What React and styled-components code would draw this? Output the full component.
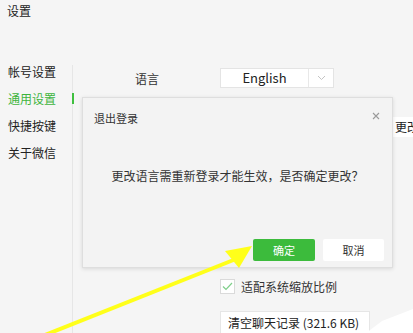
import React from "react";
import styled, { createGlobalStyle } from "styled-components";

const GlobalStyle = createGlobalStyle`
html, body {
margin:0;
padding:0;
background:#f5f5f5;
overflow:hidden;
}
* { box-sizing:border-box; }
`;

const menu = ["帐号设置", "通用设置", "快捷按键", "关于微信"];

function App() {
    return (
<Page>
<GlobalStyle />
<Header>设置</Header>
<Body>
    <Nav>
        {menu.map((m, i) => (
            <NavItem key={m} active={i === 1}>{m}</NavItem>
        ))}
    </Nav>
    <Rail />
    <Content>
        <Row top={10}>
            <Label>语言</Label>
            <Select>
                <SelectValue>English</SelectValue>
                <SelectArrow>
                    <svg width="9" height="6" viewBox="0 0 9 6">
                        <path d="M1 1 L4.5 4.5 L8 1" fill="none" stroke="#c4c4c4" strokeWidth="1" />
                    </svg>
                </SelectArrow>
            </Select>
        </Row>
        <Row top={29}>
            <Label />
            <Control>
                <PathBox />
                <SmallButton>更改</SmallButton>
            </Control>
        </Row>
        <Row top={141}>
            <Label />
            <Control>
                <Check>
                    <svg width="11" height="9" viewBox="0 0 11 9">
                        <path d="M1 4.5 L4 7.5 L10 1" fill="none" stroke="#7fcf8a" strokeWidth="1.2" />
                    </svg>
                </Check>
                <CheckLabel>适配系统缩放比例</CheckLabel>
            </Control>
        </Row>
        <Row top={16}>
            <Label />
            <ClearButton>清空聊天记录 (321.6 KB)</ClearButton>
        </Row>
    </Content>
</Body>

<Dialog>
    <DialogHead>
        <DialogTitle>退出登录</DialogTitle>
        <Close>
            <svg width="8" height="8" viewBox="0 0 8 8">
                <path d="M1 1 L7 7 M7 1 L1 7" stroke="#9a9a9a" strokeWidth="1.1" />
            </svg>
        </Close>
    </DialogHead>
    <Message>更改语言需重新登录才能生效，是否确定更改？</Message>
    <Buttons>
        <DialogButton primary>确定</DialogButton>
        <DialogButton>取消</DialogButton>
    </Buttons>
</Dialog>

<Annotation width="413" height="333" viewBox="0 0 413 333">
    <line x1="40" y1="337" x2="236" y2="259" stroke="#ffff1a" strokeWidth="4" />
    <polygon points="252,246 225,251 239,268" fill="#ffff1a" />
    <polygon points="366,333 382,321 413,309 413,333" fill="#ffffff" />
</Annotation>
</Page>
    );
}

const Page = styled.div`
position:relative;
width:413px;
height:333px;
overflow:hidden;
background:#f5f5f5;
font-family:"Noto Sans CJK SC", "Noto Sans", sans-serif;
color:#333;
`;

const Header = styled.div`
height:24px;
padding:3px 0 0 7px;
font-size:12px;
line-height:16px;
color:#222;
`;

const Body = styled.div`
display:flex;
margin-top:34px;
height:275px;
`;

const Nav = styled.div`
flex-shrink:0;
width:72px;
padding-left:8px;
`;

const NavItem = styled.div`
position:relative;
height:27px;
line-height:27px;
font-size:12px;
color:${p => p.active ? "#3db43d" : "#222"};

&::after {
    content:"";
    display:${p => p.active ? "block" : "none"};
    position:absolute;
    right:-2px;
    top:8px;
    width:2px;
    height:11px;
    background:#3fbf3f;
}
`;

const Rail = styled.div`
flex-shrink:0;
width:1px;
margin-top:7px;
background:#e6e6e6;
`;

const Content = styled.div`
flex:1;
min-width:0;
padding-left:62px;
`;

const Row = styled.div`
display:grid;
grid-template-columns:85px auto;
align-items:center;
margin-top:${p => p.top}px;
`;

const Label = styled.div`
font-size:12px;
color:#333;
padding-top:1px;
`;

const Control = styled.div`
display:flex;
align-items:center;
`;

const Select = styled.div`
display:flex;
width:114px;
height:20px;
background:#fff;
border:1px solid #e4e4e4;
`;

const SelectValue = styled.div`
flex:1;
text-align:center;
font-size:13px;
line-height:18px;
color:#222;
`;

const SelectArrow = styled.div`
width:25px;
border-left:1px solid #e8e8e8;
display:flex;
align-items:center;
justify-content:center;
`;

const PathBox = styled.div`
flex-shrink:0;
width:173px;
height:20px;
`;

const SmallButton = styled.div`
flex-shrink:0;
height:20px;
padding:0 2px;
background:#fff;
font-size:12px;
line-height:20px;
color:#222;
white-space:nowrap;
`;

const Check = styled.div`
width:15px;
height:15px;
background:#fff;
border:1px solid #dadada;
display:flex;
align-items:center;
justify-content:center;
`;

const CheckLabel = styled.div`
margin-left:6px;
font-size:12px;
color:#333;
`;

const ClearButton = styled.div`
width:150px;
height:26px;
padding-left:7px;
background:#fff;
border:1px solid #e6e6e6;
font-size:12px;
line-height:22px;
color:#222;
white-space:nowrap;
overflow:hidden;
`;

const Dialog = styled.div`
position:absolute;
left:82px;
top:97px;
width:311px;
height:171px;
display:flex;
flex-direction:column;
background:#f3f3f3;
border:1px solid #dedede;
box-shadow:0 1px 4px rgba(0,0,0,0.12);
`;

const DialogHead = styled.div`
display:flex;
align-items:flex-start;
justify-content:space-between;
height:28px;
padding:12px 12px 0 11px;
`;

const DialogTitle = styled.div`
font-size:11px;
line-height:16px;
color:#333;
`;

const Close = styled.div`
display:flex;
padding-top:2px;

svg { display:block; }
`;

const Message = styled.div`
margin-top:42px;
text-align:center;
font-size:12px;
line-height:16px;
color:#333;
`;

const Buttons = styled.div`
margin-top:auto;
display:flex;
justify-content:flex-end;
gap:8px;
padding:0 8px 6px 0;
`;

const DialogButton = styled.div`
width:${p => p.primary ? 62 : 61}px;
height:22px;
line-height:22px;
text-align:center;
font-size:11px;
color:${p => p.primary ? "#fff" : "#333"};
background:${p => p.primary ? "#3cbb3c" : "#fff"};
border-radius:2px;
`;

const Annotation = styled.svg`
position:absolute;
left:0;
top:0;
pointer-events:none;
`;

export default App
